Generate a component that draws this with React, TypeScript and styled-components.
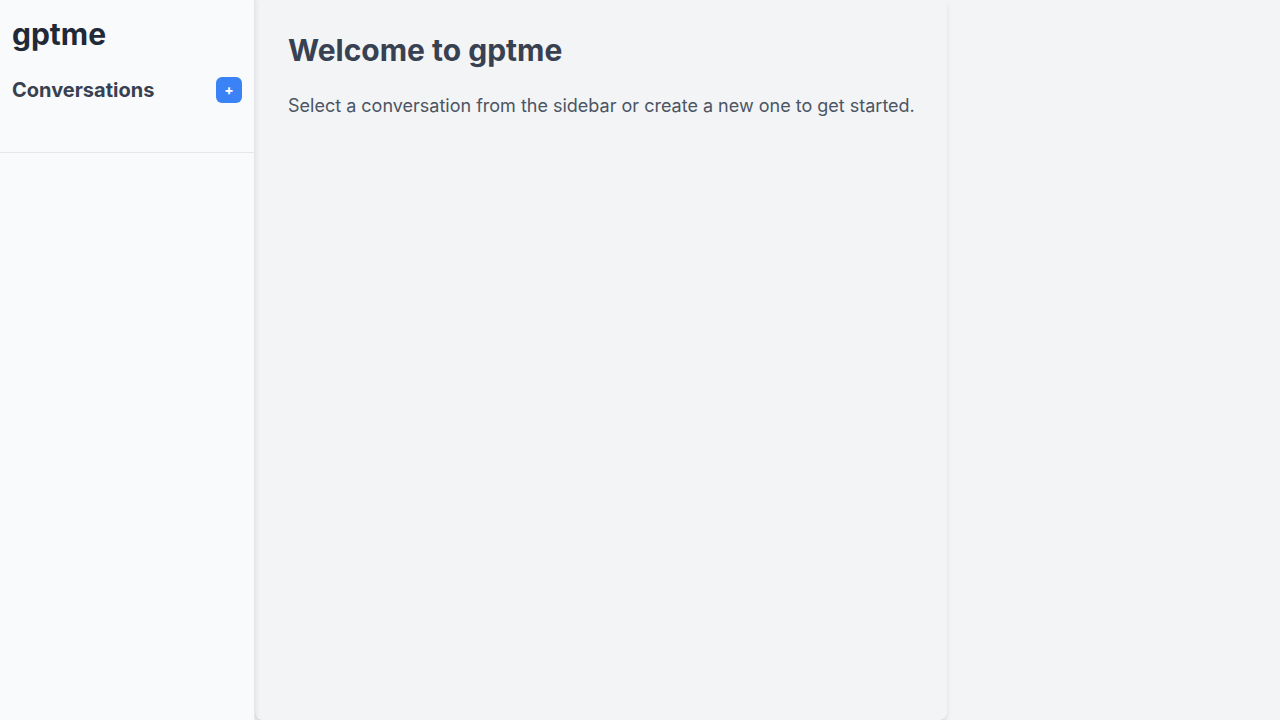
import React from 'react'
import styled, { createGlobalStyle } from 'styled-components'

const GlobalStyle = createGlobalStyle`
  html, body {
    margin: 0;
    padding: 0;
    height: 100%;
    background: #f3f4f6;
    font-family: Inter, "Noto Sans", sans-serif;
  }
  #root {
    height: 100%;
  }
`

const Layout = styled.div`
  display: flex;
  height: 720px;
  overflow: hidden;
`

const Sidebar = styled.aside`
  width: 254px;
  flex-shrink: 0;
  background: #f9fafb;
  border-right: 1px solid #e5e7eb;
  box-shadow: 2px 0 4px rgba(0, 0, 0, 0.06);
  display: flex;
  flex-direction: column;
  position: relative;
  z-index: 1;
`

const SidebarHead = styled.div`
  padding: 12px 12px 0 12px;
  height: 140px;
  border-bottom: 1px solid #e5e7eb;
`

const Logo = styled.h1`
  margin: 0;
  font-size: 30px;
  line-height: 44px;
  font-weight: 700;
  color: #1f2937;
`

const ConvRow = styled.div`
  margin-top: 21px;
  display: flex;
  align-items: center;
  justify-content: space-between;
`

const ConvTitle = styled.h2`
  margin: 0;
  font-size: 20px;
  font-weight: 700;
  color: #374151;
`

const AddButton = styled.button`
  width: 26px;
  height: 26px;
  border: none;
  border-radius: 6px;
  background: #3b82f6;
  color: #fff;
  font-family: inherit;
  font-size: 14px;
  font-weight: 700;
  line-height: 1;
  padding: 0;
  display: flex;
  align-items: center;
  justify-content: center;
`

const Main = styled.main`
  width: 692px;
  height: 720px;
  background: #f3f4f6;
  border-radius: 0 0 8px 8px;
  box-shadow: 0 4px 6px -1px rgba(0, 0, 0, 0.1), 0 2px 4px -2px rgba(0, 0, 0, 0.1);
  padding: 32px 32px 32px 33px;
  box-sizing: border-box;
`

const Title = styled.h1`
  margin: 0;
  font-size: 30px;
  line-height: 36px;
  font-weight: 700;
  color: #374151;
`

const Lead = styled.p`
  margin: 24px 0 0 0;
  font-size: 18px;
  line-height: 28px;
  color: #4b5563;
`

export default function App() {
  return (
    <>
      <GlobalStyle />
      <Layout>
        <Sidebar>
          <SidebarHead>
            <Logo>gptme</Logo>
            <ConvRow>
              <ConvTitle>Conversations</ConvTitle>
              <AddButton>+</AddButton>
            </ConvRow>
          </SidebarHead>
        </Sidebar>
        <Main>
          <Title>Welcome to gptme</Title>
          <Lead>Select a conversation from the sidebar or create a new one to get started.</Lead>
        </Main>
      </Layout>
    </>
  )
}
